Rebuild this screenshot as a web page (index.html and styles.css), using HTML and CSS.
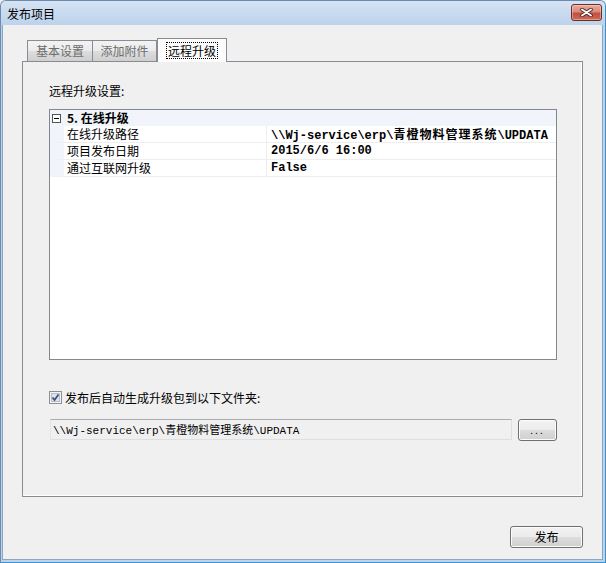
FILE: index.html
```html
<!DOCTYPE html>
<html lang="zh-CN">
<head>
  <meta charset="UTF-8">
  <title>发布项目</title>
  <link rel="stylesheet" href="styles.css">
</head>
<body>

<div class="window">
  <div class="titlebar">
    <span class="title">发布项目</span>
    <button class="close" aria-label="关闭">
      <svg width="13" height="9" viewBox="0 0 13 9">
        <path d="M2 1.5 L11 7.5 M11 1.5 L2 7.5" stroke="#4a2a26" stroke-width="3.6" stroke-linecap="round"/>
        <path d="M2 1.5 L11 7.5 M11 1.5 L2 7.5" stroke="#fff" stroke-width="1.8" stroke-linecap="round"/>
      </svg>
    </button>
  </div>

  <div class="client">
    <div class="tabs">
      <div class="tab tab-first">基本设置</div>
      <div class="tab tab-second">添加附件</div>
      <div class="tab active"><span class="focus">远程升级</span></div>
    </div>

    <div class="panel">
      <div class="label">远程升级设置:</div>

      <div class="grid">
        <div class="cat">
          <svg class="expander" width="9" height="9" viewBox="0 0 9 9">
            <rect x="0.5" y="0.5" width="8" height="8" fill="#fff" stroke="#555"/>
            <path d="M2 4.5 H7" stroke="#000"/>
          </svg>
          <span class="cat-name">5. 在线升级</span>
        </div>
        <div class="row">
          <div class="name">在线升级路径</div>
          <div class="value">\\Wj-service\erp\<span class="cjk">青橙物料管理系统</span>\UPDATA</div>
        </div>
        <div class="row">
          <div class="name">项目发布日期</div>
          <div class="value">2015/6/6 16:00</div>
        </div>
        <div class="row">
          <div class="name">通过互联网升级</div>
          <div class="value">False</div>
        </div>
      </div>

      <label class="check">
        <svg class="box" width="13" height="13" viewBox="0 0 13 13">
          <rect x="0.5" y="0.5" width="12" height="12" fill="#f4f4f4" stroke="#8e8f8f"/>
          <rect x="2.5" y="2.5" width="8" height="8" fill="#dfe3ea" stroke="#b9bec6"/>
          <path d="M3.5 6.5 L5.5 9 L9.5 3.5" fill="none" stroke="#3f5280" stroke-width="1.8"/>
        </svg>
        发布后自动生成升级包到以下文件夹:
      </label>

      <div class="pathrow">
        <div class="textbox">\\Wj-service\erp\<span class="cjk">青橙物料管理系统</span>\UPDATA</div>
        <button class="btn btn-browse">...</button>
      </div>
    </div>

    <div class="footer">
      <button class="btn btn-publish">发布</button>
    </div>
  </div>
</div>

</body>
</html>
```

FILE: styles.css
```css
body {
  margin: 0;
  padding: 0;
  background-color: #f0f0f0;
  font-family: "Noto Sans CJK SC", "Liberation Sans", sans-serif;
  font-size: 12px;
  color: #000;
}
.window {
  width: 606px;
  height: 563px;
  box-sizing: border-box;
  display: flex;
  flex-direction: column;
  background: #bcd3eb;
  border: 1px solid #6d8bb0;
  border-right-color: #3b93d3;
  border-bottom-color: #3b93d3;
  border-radius: 6px 6px 0 0;
  padding: 0 2px 2px 1px;
}
.titlebar {
  height: 24px;
  display: flex;
  align-items: center;
  justify-content: space-between;
  padding: 0 3px 0 6px;
  background: linear-gradient(to bottom, #d6e3f3, #bcd3eb);
  margin: 0 -2px 0 -1px;
  border-radius: 5px 5px 0 0;
}
.title {
  font-size: 12px;
  line-height: 16px;
  margin-top: 1px;
}
.close {
  width: 31px;
  height: 17px;
  margin-top: -2px;
  padding: 0;
  display: flex;
  align-items: center;
  justify-content: center;
  border: 1px solid #6c2c26;
  border-radius: 3px;
  background: linear-gradient(to bottom, #e9a99b 0%, #d98a7a 45%, #c2503e 55%, #cf6a55 100%);
  box-shadow: inset 0 0 0 1px rgba(255, 255, 255, 0.35);
}
.client {
  flex: 1;
  background-color: #f0f0f0;
  border: 1px solid #8ba6c5;
  border-top: none;
  padding: 0 19px 0 19px;
  display: flex;
  flex-direction: column;
}
.tabs {
  display: flex;
  align-items: flex-end;
  margin-top: 13px;
  padding-left: 5px;
  height: 24px;
  margin-bottom: -1px;
  position: relative;
  z-index: 1;
}
.tab {
  height: 21px;
  box-sizing: border-box;
  border: 1px solid #898c95;
  border-bottom: none;
  background: linear-gradient(to bottom, #f3f3f3 0%, #ebebeb 50%, #dddddd 51%, #cfcfcf 100%);
  color: #6d6d6d;
  display: flex;
  align-items: center;
  justify-content: center;
  line-height: 16px;
  margin-bottom: 1px;
}
.tab-first {
  width: 66px;
}
.tab-second {
  width: 64px;
  border-left: none;
}
.tab.active {
  width: 70px;
  height: 24px;
  background: #fcfcfc;
  color: #000;
  margin-bottom: 0;
  border-left: 1px solid #898c95;
}
.focus {
  outline: 1px dotted #000;
  padding: 0 1px;
  line-height: 15px;
  margin-top: -1px;
}
.panel {
  height: 436px;
  box-sizing: border-box;
  border: 1px solid #898c95;
  box-shadow: inset -1px -1px 0 #fff;
  padding: 21px 0 0 26px;
  display: flex;
  flex-direction: column;
}
.label {
  line-height: 16px;
}
.grid {
  margin-top: 10px;
  width: 508px;
  height: 251px;
  box-sizing: border-box;
  border: 1px solid #828790;
  background-color: #fff;
}
.cat {
  height: 16px;
  display: flex;
  align-items: center;
  background-color: #f1f4fa;
}
.expander {
  margin-left: 2px;
}
.cat-name {
  font-weight: bold;
  margin-left: 6px;
  line-height: 16px;
}
.row {
  height: 17px;
  box-sizing: border-box;
  display: flex;
  border-left: 14px solid #f1f4fa;
  border-bottom: 1px solid #eeeeee;
}
.name {
  width: 203px;
  padding-left: 3px;
  border-right: 1px solid #eeeeee;
  line-height: 16px;
  box-sizing: border-box;
}
.value {
  padding-left: 4px;
  font-family: "Liberation Mono", "Noto Sans CJK SC", monospace;
  font-weight: bold;
  font-size: 12px;
  line-height: 16px;
  white-space: nowrap;
}
.value .cjk {
  font-family: "Noto Sans CJK SC", sans-serif;
  letter-spacing: 1px;
}
.check {
  margin-top: 31px;
  display: flex;
  align-items: center;
  height: 13px;
  line-height: 16px;
}
.box {
  margin-right: 3px;
}
.pathrow {
  margin-top: 15px;
  display: flex;
  align-items: flex-start;
  padding-left: 1px;
}
.textbox {
  width: 462px;
  height: 21px;
  box-sizing: border-box;
  border: 1px solid #dbdfe6;
  border-top-color: #abadb3;
  border-left-color: #e2e3ea;
  padding-left: 2px;
  font-family: "Liberation Mono", "Noto Sans CJK SC", monospace;
  font-size: 11px;
  line-height: 19px;
  white-space: nowrap;
}
.textbox .cjk {
  font-family: "Noto Sans CJK SC", sans-serif;
}
.btn {
  box-sizing: border-box;
  border: 1px solid #707070;
  border-radius: 3px;
  background: linear-gradient(to bottom, #f2f2f2 0%, #ebebeb 50%, #dddddd 51%, #cfcfcf 100%);
  box-shadow: inset 0 0 0 1px #fcfcfc;
  font-family: "Noto Sans CJK SC", sans-serif;
  font-size: 12px;
  color: #000;
  padding: 0;
}
.btn-browse {
  width: 39px;
  height: 22px;
  margin-left: 6px;
  font-size: 10px;
  letter-spacing: 2px;
  line-height: 12px;
}
.footer {
  display: flex;
  justify-content: flex-end;
  margin-top: 29px;
}
.btn-publish {
  width: 73px;
  height: 22px;
  line-height: 16px;
}
```
